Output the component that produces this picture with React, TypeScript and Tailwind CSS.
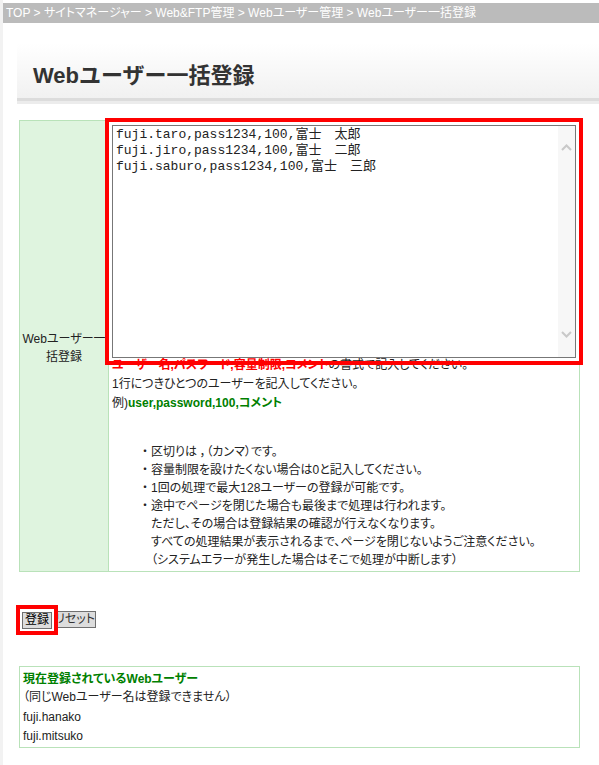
import { ReactNode } from 'react';

const Chevron = ({ down = false }: { down?: boolean }) => (
  <svg width="11" height="7" viewBox="0 0 11 7" className="block">
    <polyline
      points={down ? '1,1 5.5,5.5 10,1' : '1,6 5.5,1.5 10,6'}
      fill="none"
      stroke="#c9c9c9"
      strokeWidth="2"
    />
  </svg>
);

const Bullet = ({ children }: { children: ReactNode }) => (
  <li className="flex">
    <span className="w-[12px] shrink-0 text-center">・</span>
    <div>{children}</div>
  </li>
);

const sample = [
  'fuji.taro,pass1234,100,富士　太郎',
  'fuji.jiro,pass1234,100,富士　二郎',
  'fuji.saburo,pass1234,100,富士　三郎',
].join('\n');

export default function App() {
  return (
    <div className="min-h-screen bg-white border-l-[3px] border-[#f2f2f2] pt-[3px] text-[12px] text-[#222] font-['Liberation_Sans','Noto_Sans_CJK_JP',sans-serif] [font-feature-settings:'palt']">
      {/* breadcrumb */}
      <div className="h-[20px] bg-[#bbbbbb] pl-[3px] leading-[20px] text-white whitespace-nowrap">
        TOP &gt; サイトマネージャー &gt; Web&amp;FTP管理 &gt; Webユーザー管理 &gt; Webユーザー一括登録
      </div>

      {/* title */}
      <div className="ml-[14px] mt-[20px]">
        <div className="h-[58px] bg-gradient-to-b from-white to-[#f1f1f1] pl-[16px] pt-[19px] border-b-[3px] border-[#dcdcdc]">
          <h1 className="text-[22px] leading-[28px] font-bold text-[#333] [font-feature-settings:normal]">
            Webユーザー一括登録
          </h1>
        </div>
        <div className="h-[3px] bg-[#ececec]" />
      </div>

      {/* form table */}
      <div className="ml-[16px] mt-[16px] w-[561px] border border-[#b9e2b9] flex">
        <div className="w-[89px] shrink-0 bg-[#dff4df] border-r border-[#b9e2b9] flex items-center justify-center text-center leading-[18px] pt-[4px]">
          <span>
            Webユーザー一
            <br />
            括登録
          </span>
        </div>
        <div className="flex-1 pl-[3px] pt-[4px] pb-[2px]">
          <div className="relative w-[464px]">
            <div className="h-[233px] border border-[#777] flex bg-white">
              <textarea
                readOnly
                defaultValue={sample}
                className="flex-1 resize-none overflow-hidden outline-none pl-[3px] pt-[1px] text-[13px] leading-[16px] text-[#222] font-['Liberation_Mono','Noto_Sans_CJK_JP',monospace] [font-feature-settings:normal]"
              />
              <div className="w-[17px] bg-[#f7f7f7] flex flex-col items-center justify-between pt-[18px] pb-[19px]">
                <Chevron />
                <Chevron down />
              </div>
            </div>
            <div className="absolute -inset-[7px] border-[4px] border-[#ff0000] pointer-events-none" />
          </div>

          <div className="-mt-[2px] leading-[19px]">
            <p>
              <span className="font-bold text-[#ff0000]">ユーザー名,パスワード,容量制限,コメント</span>
              の書式で記入してください。
            </p>
            <p>1行につきひとつのユーザーを記入してください。</p>
            <p>
              例)<span className="font-bold text-[#008000]">user,password,100,コメント</span>
            </p>
          </div>

          <ul className="mt-[30px] pl-[27px] leading-[18px]">
            <Bullet>区切りは ，（カンマ）です。</Bullet>
            <Bullet>容量制限を設けたくない場合は0と記入してください。</Bullet>
            <Bullet>1回の処理で最大128ユーザーの登録が可能です。</Bullet>
            <Bullet>
              途中でページを閉じた場合も最後まで処理は行われます。
              <br />
              ただし、その場合は登録結果の確認が行えなくなります。
              <br />
              すべての処理結果が表示されるまで、ページを閉じないようご注意ください。
              <br />
              （システムエラーが発生した場合はそこで処理が中断します）
            </Bullet>
          </ul>
        </div>
      </div>

      {/* buttons */}
      <div className="ml-[19px] mt-[39px] flex gap-[2px]">
        <div className="relative">
          <button className="h-[17px] px-[2px] bg-[#dddddd] border border-[#707070] text-[12px] leading-[15px] text-black">
            登録
          </button>
          <div className="absolute -inset-[6px] border-[4px] border-[#ff0000] pointer-events-none" />
        </div>
        <button className="h-[17px] px-0 bg-[#dddddd] border border-[#707070] text-[12px] leading-[15px] text-[#333]">
          リセット
        </button>
      </div>

      {/* current users */}
      <div className="ml-[16px] mt-[37px] w-[561px] border border-[#b9e2b9] pl-[3px] pt-[3px] pb-[1px]">
        <p className="font-bold text-[#008000] leading-[18px]">現在登録されているWebユーザー</p>
        <p className="leading-[18px]">（同じWebユーザー名は登録できません）</p>
        <div className="mt-[2px] leading-[19px]">
          <p>fuji.hanako</p>
          <p>fuji.mitsuko</p>
        </div>
      </div>
    </div>
  );
}
